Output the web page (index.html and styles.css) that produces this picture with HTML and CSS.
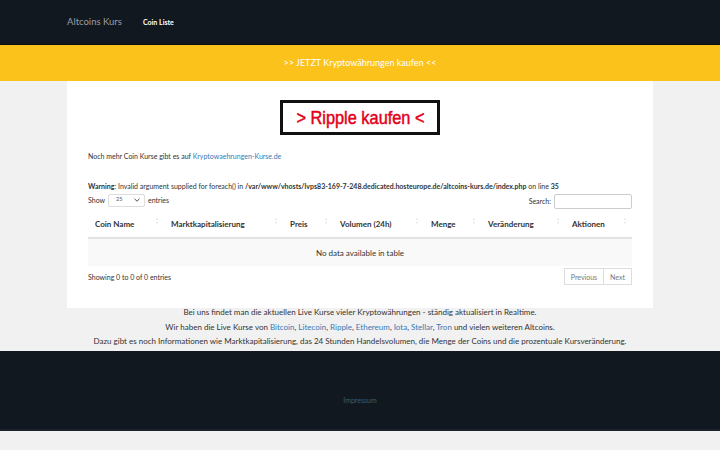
FILE: index.html
```html
<!DOCTYPE html>
<html lang="de">
<head>
<meta charset="utf-8">
<title>Altcoins Kurs</title>
<link rel="stylesheet" href="styles.css">
</head>
<body>
<header class="navbar">
  <div class="nav-inner">
    <span class="brand">Altcoins Kurs</span>
    <span class="nav-link">Coin Liste</span>
  </div>
</header>
<div class="promo">&gt;&gt; JETZT Kryptowährungen kaufen &lt;&lt;</div>
<main class="container">
  <div class="banner-wrap">
    <div class="banner"><span>&gt; Ripple kaufen &lt;</span></div>
  </div>
  <p class="more">Noch mehr Coin Kurse gibt es auf <a href="#">Kryptowaehrungen-Kurse.de</a></p>
  <p class="warning"><b>Warning</b>: Invalid argument supplied for foreach() in <b>/var/www/vhosts/lvps83-169-7-248.dedicated.hosteurope.de/altcoins-kurs.de/index.php</b> on line <b>35</b></p>
  <div class="controls">
    <label class="length">Show <span class="select">25<svg width="6" height="4" viewBox="0 0 6 4"><path d="M0.5 0.8 L3 3.2 L5.5 0.8" fill="none" stroke="#555" stroke-width="1"/></svg></span> entries</label>
    <label class="search">Search: <span class="input"></span></label>
  </div>
  <table class="table">
    <thead>
      <tr>
        <th class="c1">Coin Name<i class="sort"></i></th>
        <th class="c2">Marktkapitalisierung<i class="sort"></i></th>
        <th class="c3">Preis<i class="sort"></i></th>
        <th class="c4">Volumen (24h)<i class="sort"></i></th>
        <th class="c5">Menge<i class="sort"></i></th>
        <th class="c6">Veränderung<i class="sort"></i></th>
        <th class="c7">Aktionen<i class="sort"></i></th>
      </tr>
    </thead>
    <tbody>
      <tr><td colspan="7" class="empty">No data available in table</td></tr>
    </tbody>
  </table>
  <div class="footer-row">
    <span class="info">Showing 0 to 0 of 0 entries</span>
    <div class="pager"><span class="pbtn">Previous</span><span class="pbtn">Next</span></div>
  </div>
</main>
<section class="about">
  <p>Bei uns findet man die aktuellen Live Kurse vieler Kryptowährungen - ständig aktualisiert in Realtime.</p>
  <p>Wir haben die Live Kurse von <a href="#">Bitcoin</a>, <a href="#">Litecoin</a>, <a href="#">Ripple</a>, <a href="#">Ethereum</a>, <a href="#">Iota</a>, <a href="#">Stellar</a>, <a href="#">Tron</a> und vielen weiteren Altcoins.</p>
  <p>Dazu gibt es noch Informationen wie Marktkapitalisierung, das 24 Stunden Handelsvolumen, die Menge der Coins und die prozentuale Kursveränderung.</p>
</section>
<footer class="site-footer">
  <a href="#">Impressum</a>
</footer>
</body>
</html>
```

FILE: styles.css
```css
* { box-sizing: border-box; }
html, body { margin: 0; padding: 0; }
body {
  background: #f1f1f1;
  font-family: Lato, "Open Sans", sans-serif;
  color: #333;
  font-size: 7px;
  line-height: 1.43;
}
a { color: #337ab7; text-decoration: none; }
p { margin: 0; }

.navbar {
  background: #121820;
  height: 45px;
  border-bottom: 1px solid #0b0f14;
}
.nav-inner {
  width: 586px;
  margin: 0 auto;
  display: flex;
  align-items: center;
  height: 44px;
}
.brand {
  color: #9a9da2;
  font-size: 9.5px;
  width: 76px;
}
.nav-link {
  color: #fff;
  font-weight: 700;
  font-size: 7px;
}

.promo {
  background: #fcc21c;
  height: 36px;
  display: flex;
  align-items: center;
  justify-content: center;
  color: #fff;
  font-size: 9px;
}

.container {
  width: 586px;
  margin: 0 auto;
  background: #fff;
  padding: 19px 21px 23px;
}
.banner-wrap { display: flex; justify-content: center; }
.banner {
  width: 160px;
  height: 35px;
  border: 3px solid #111;
  background: #fff;
  color: #e2001a;
  font-family: "Liberation Sans", Arial, sans-serif;
  font-size: 19px;
  display: flex;
  align-items: center;
  justify-content: center;
}
.banner span {
  display: inline-block;
  transform: scaleX(0.86);
  white-space: nowrap;
  line-height: 1;
  -webkit-text-stroke: 0.5px #e2001a;
}
.more { margin-top: 16px; line-height: 10px; }
.warning { margin-top: 20px; line-height: 10px; white-space: nowrap; }
.controls {
  display: flex;
  justify-content: space-between;
  align-items: center;
  margin-top: -3px;
  height: 18px;
}
.length { display: flex; align-items: center; gap: 3px; margin-top: 6px; }
.select {
  display: inline-flex;
  align-items: center;
  justify-content: space-between;
  width: 37px;
  height: 13px;
  border: 1px solid #ddd;
  border-radius: 2px;
  padding: 0 4px 0 7px;
  font-size: 5.5px;
  color: #555;
}
.search { display: flex; align-items: center; gap: 3px; margin-top: 8px; }
.input {
  display: inline-block;
  width: 78px;
  height: 15px;
  border: 1px solid #ccc;
  border-radius: 2px;
}

.table {
  width: 100%;
  border-collapse: collapse;
  margin-top: 6px;
  font-size: 8px;
}
.table th {
  text-align: left;
  font-weight: 700;
  height: 26px;
  padding: 0 7px;
  border-bottom: 2px solid #e3e3e3;
  position: relative;
  white-space: nowrap;
}
.sort {
  position: absolute;
  right: 5px;
  top: 6px;
  width: 3px;
  height: 6px;
}
.sort::before, .sort::after {
  content: "";
  position: absolute;
  left: 0;
  border-left: 1.5px solid transparent;
  border-right: 1.5px solid transparent;
}
.sort::before { top: 0; border-bottom: 2.5px solid #ddd; }
.sort::after { bottom: 0; border-top: 2.5px solid #ddd; }
.c1 { width: 76px; }
.c2 { width: 119px; }
.c3 { width: 50px; }
.c4 { width: 91px; }
.c5 { width: 57px; }
.c6 { width: 84px; }
.c7 { width: 67px; }
.empty {
  background: #f9f9f9;
  text-align: center;
  height: 28px;
  padding: 2px 0 0;
}

.footer-row {
  display: flex;
  justify-content: space-between;
  align-items: center;
  margin-top: 2px;
}
.pager { display: flex; }
.pbtn {
  border: 1px solid #ddd;
  height: 17px;
  padding: 0 6px;
  display: flex;
  align-items: center;
  color: #777;
}
.pbtn + .pbtn { border-left: none; }

.about {
  text-align: center;
  font-size: 8px;
  line-height: 14.5px;
  margin-top: -3px;
  padding-bottom: 2.5px;
}

.site-footer {
  background: #121820;
  height: 80px;
  display: flex;
  align-items: center;
  justify-content: center;
  padding-top: 20px;
  font-size: 7px;
  border-bottom: 2px solid #1b222b;
}
.site-footer a { color: #2f5f8a; }
```
